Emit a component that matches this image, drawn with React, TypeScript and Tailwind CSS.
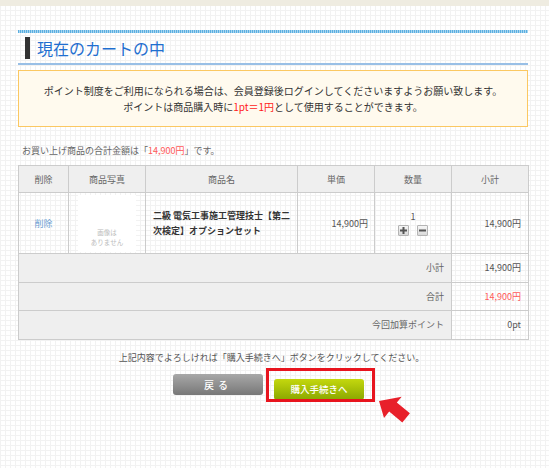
import React from 'react'

const font = { fontFamily: '"Noto Sans CJK JP", "Noto Sans", sans-serif' }

function QtyButton({ kind }: { kind: 'plus' | 'minus' }) {
  return (
    <span className="inline-flex h-[11px] w-[11px] items-center justify-center rounded-[1px] border border-[#b4b4b4] bg-[linear-gradient(#f6f6f6,#d9d9d9)]">
      <svg width="7" height="7" viewBox="0 0 7 7">
        <rect x="0" y="2.5" width="7" height="2" fill="#555" />
        {kind === 'plus' && <rect x="2.5" y="0" width="2" height="7" fill="#555" />}
      </svg>
    </span>
  )
}

export default function App() {
  const th = 'border border-[#cccccc] bg-[#efefef] font-normal text-[#666] h-[27px]'
  const td = 'border border-[#cccccc]'
  return (
    <div
      style={font}
      className="min-h-[468px] w-full bg-white bg-[linear-gradient(#f2f2f2_1px,transparent_1px),linear-gradient(90deg,#f2f2f2_1px,transparent_1px)] bg-size-[5px_5px]"
    >
      <div className="h-[6px] bg-[#efece1]" />

      <main className="mx-[18px] w-[510px] pt-[24px]">
        {/* Title */}
        <div className="h-[3px] bg-[repeating-linear-gradient(90deg,#5aaee0_0px,#5aaee0_1px,#a9d6f0_1px,#a9d6f0_2px)]" />
        <div className="flex h-[30px] items-center pl-[7px]">
          <span className="h-[22px] w-[5px] bg-[#333]" />
          <h2 className="ml-[7px] text-[16px] leading-none text-[#1f6fd0]">現在のカートの中</h2>
        </div>
        <div className="h-[2px] bg-[#98bfe6]" />

        {/* Notice */}
        <div className="mt-[5px] border border-[#fbc862] bg-[#fffaee] py-[12px] text-center text-[10px] leading-[15.7px] text-[#333]">
          <p>ポイント制度をご利用になられる場合は、会員登録後ログインしてくださいますようお願い致します。</p>
          <p>
            ポイントは商品購入時に<span className="text-[#ff1a1a]">1pt＝1円</span>として使用することができます。
          </p>
        </div>

        <p className="mt-[17px] pl-[4px] text-[9px] leading-[13px] text-[#666]">
          お買い上げ商品の合計金額は「<span className="text-[#ff5a5a]">14,900円</span>」です。
        </p>

        {/* Cart table */}
        <table className="mt-[8px] w-[510px] table-fixed border-collapse text-[9px] text-[#555]">
          <colgroup>
            <col className="w-[50px]" />
            <col className="w-[77px]" />
            <col className="w-[152px]" />
            <col className="w-[77px]" />
            <col className="w-[77px]" />
            <col className="w-[77px]" />
          </colgroup>
          <thead>
            <tr>
              <th className={th}>削除</th>
              <th className={th}>商品写真</th>
              <th className={th}>商品名</th>
              <th className={th}>単価</th>
              <th className={th}>数量</th>
              <th className={th}>小計</th>
            </tr>
          </thead>
          <tbody>
            <tr className="h-[61px]">
              <td className={`${td} text-center text-[#6d9fd3]`}>削除</td>
              <td className={`${td} p-0`}>
                <div className="mx-auto flex h-[57px] w-[58px] flex-col items-center justify-end bg-white pb-[5px] text-[6.5px] leading-[10px] text-[#bbb]">
                  <span>画像は</span>
                  <span>ありません</span>
                </div>
              </td>
              <td className={`${td} whitespace-nowrap pl-[7px] font-bold leading-[15px] text-[#333]`}>
                二級 電気工事施工管理技士【第二
                <br />
                次検定】オプションセット
              </td>
              <td className={`${td} pr-[6px] text-right`}>14,900円</td>
              <td className={`${td} text-center`}>
                <div className="flex flex-col items-center gap-[2px]">
                  <span className="leading-[12px]">1</span>
                  <div className="flex gap-[8px]">
                    <QtyButton kind="plus" />
                    <QtyButton kind="minus" />
                  </div>
                </div>
              </td>
              <td className={`${td} pr-[7px] text-right`}>14,900円</td>
            </tr>
            <tr className="h-[28.5px]">
              <td colSpan={5} className={`${td} bg-[#efefef] pr-[7px] text-right text-[#666]`}>小計</td>
              <td className={`${td} pr-[7px] text-right`}>14,900円</td>
            </tr>
            <tr className="h-[28.5px]">
              <td colSpan={5} className={`${td} bg-[#efefef] pr-[7px] text-right text-[#666]`}>合計</td>
              <td className={`${td} pr-[7px] text-right text-[#ff5a5a]`}>14,900円</td>
            </tr>
            <tr className="h-[28.5px]">
              <td colSpan={5} className={`${td} bg-[#efefef] pr-[7px] text-right text-[#666]`}>今回加算ポイント</td>
              <td className={`${td} pr-[7px] text-right`}>0pt</td>
            </tr>
          </tbody>
        </table>

        <p className="mt-[11px] pr-[3px] text-center text-[9px] leading-[13px] text-[#555]">
          上記内容でよろしければ「購入手続きへ」ボタンをクリックしてください。
        </p>

        {/* Buttons */}
        <div className="mt-[10px] flex justify-center gap-[11px] pr-[9px]">
          <button className="h-[21px] w-[90px] rounded-[3px] bg-[linear-gradient(#a8a8a8,#787878)] text-[10px] font-medium tracking-[4px] text-white">
            戻る
          </button>
          <div className="relative">
            <button className="h-[21px] w-[90px] rounded-[3px] bg-[linear-gradient(#c4d80e,#8aa700)] text-[9.5px] font-medium text-white">
              購入手続きへ
            </button>
            <span className="pointer-events-none absolute left-[-8px] top-[-6px] h-[34px] w-[109px] border-[3px] border-[#e8141e]" />
            <svg className="pointer-events-none absolute left-0 top-0 overflow-visible" width="140" height="52">
              <polygon
                points="105,27 127.7,22.7 122.8,28.4 135.9,39.3 128.3,48.5 115.2,37.6 110,44"
                fill="#e8202a"
              />
            </svg>
          </div>
        </div>
      </main>
    </div>
  )
}
